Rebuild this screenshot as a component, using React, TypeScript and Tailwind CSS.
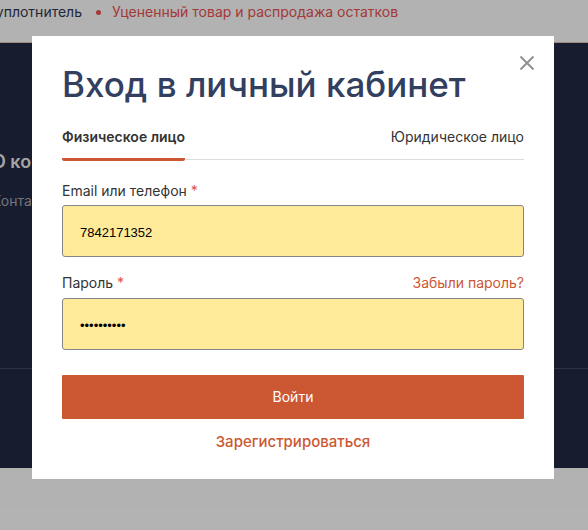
import { useState } from "react";

const fieldClass =
  "block h-[52px] w-full rounded-[3px] border border-[#858585] bg-[#ffea9a] px-[17px] pt-0.5 font-['Liberation_Sans',Arial,sans-serif] text-[13px] text-black outline-none";

const tabClass = "-mb-0.5 rounded-b-[2px] border-b-3 pb-[11px]";

function SitePage() {
  return (
    <div aria-hidden="true" className="flex min-h-screen flex-col overflow-hidden bg-white">
      <nav className="flex h-[43px] items-start gap-3.5 whitespace-nowrap border-b border-[#e5c9b5] pt-0.5 text-sm leading-5">
        <span className="flex w-[82px] shrink-0 justify-end text-[#303952]">уплотнитель</span>
        <span className="flex items-center gap-[11px] text-[#eb5252]">
          <span className="size-[5px] rounded-full bg-current" />
          Уцененный товар и распродажа остатков
        </span>
      </nav>
      <footer className="h-[425px] bg-[#222942] pt-[107px]">
        <div className="h-[219px] whitespace-nowrap border-b border-[#434a61]">
          <h2 className="-ml-2 text-lg font-semibold leading-6 text-[#ececec]">О компании</h2>
          <p className="-ml-2 mt-[17px] text-sm leading-5 text-[#a5a7b0]">Контакты</p>
        </div>
      </footer>
    </div>
  );
}

export default function App() {
  const [login, setLogin] = useState("7842171352");
  const [password, setPassword] = useState("password12");

  return (
    <div className="relative font-[Inter,Roboto,sans-serif] text-[#333333]">
      <SitePage />
      <div className="absolute inset-0 flex items-start justify-center bg-black/30 pl-8 pr-[34px] pt-9">
        <section
          role="dialog"
          aria-labelledby="login-title"
          className="relative w-full max-w-[522px] bg-white px-[30px] pb-[27px] pt-6"
        >
          <button type="button" aria-label="Закрыть" className="absolute right-5 top-5 text-[#919191]">
            <svg viewBox="0 0 14 14" className="size-3.5" fill="none" stroke="currentColor" strokeWidth="2">
              <path d="M.5.5l13 13M13.5.5L.5 13.5" />
            </svg>
          </button>
          <h1 id="login-title" className="text-[35px] font-medium leading-[48px] text-[#333f5f]">
            Вход в личный кабинет
          </h1>
          <div role="tablist" className="mt-[19px] flex justify-between border-b border-[#dddddd] text-sm leading-5">
            <button
              type="button"
              role="tab"
              aria-selected="true"
              className={`${tabClass} border-[#cc5833] font-semibold`}
            >
              Физическое лицо
            </button>
            <button type="button" role="tab" aria-selected="false" className={`${tabClass} border-transparent`}>
              Юридическое лицо
            </button>
          </div>
          <form onSubmit={(event) => event.preventDefault()} className="mt-[21px] text-sm leading-5">
            <label htmlFor="login" className="mb-1 block">
              Email или телефон <span className="text-[#d9553b]">*</span>
            </label>
            <input
              id="login"
              type="text"
              value={login}
              onChange={(event) => setLogin(event.target.value)}
              className={fieldClass}
            />
            <div className="mb-[5px] mt-4 flex justify-between">
              <label htmlFor="password">
                Пароль <span className="text-[#d9553b]">*</span>
              </label>
              <a href="#forgot" className="text-[#cc5833]">
                Забыли пароль?
              </a>
            </div>
            <input
              id="password"
              type="password"
              value={password}
              onChange={(event) => setPassword(event.target.value)}
              className={fieldClass}
            />
            <button type="submit" className="mt-[25px] h-11 w-full rounded-[1px] bg-[#cc5833] text-white">
              Войти
            </button>
            <a href="#register" className="mx-auto mt-[13px] block w-fit text-[15px] font-medium leading-5 text-[#cc5833]">
              Зарегистрироваться
            </a>
          </form>
        </section>
      </div>
    </div>
  );
}
